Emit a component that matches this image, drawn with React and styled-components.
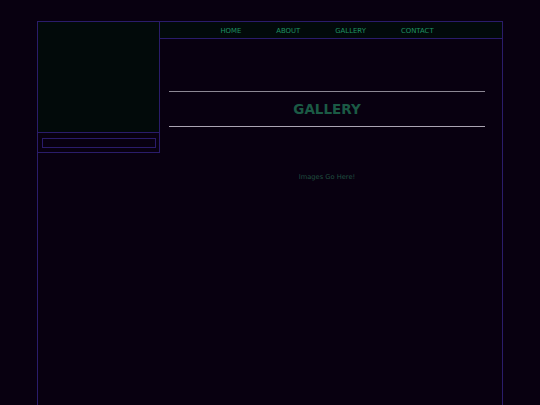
import React from "react"
import styled, { createGlobalStyle } from "styled-components"

const navItems = ["HOME", "ABOUT", "GALLERY", "CONTACT"]

const GlobalStyle = createGlobalStyle`
  html, body {
    margin: 0;
    padding: 0;
    background: #080010;
    font-family: "DejaVu Sans", Verdana, sans-serif;
  }
`

const Page = styled.div`
  width: 466px;
  min-height: 384px;
  margin: 21px 0 0 37px;
  box-sizing: border-box;
  border: 1px solid #2a1c6a;
  border-bottom: none;
  display: flex;
  align-items: flex-start;
`

const Sidebar = styled.aside`
  width: 122px;
  flex-shrink: 0;
  box-sizing: border-box;
  border-right: 1px solid #2a1c6a;
  border-bottom: 1px solid #2a1c6a;
  display: flex;
  flex-direction: column;
`

const Banner = styled.div`
  height: 110px;
  background: #020a0a;
  border-bottom: 1px solid #2a1c6a;
`

const SearchRow = styled.div`
  padding: 5px 3px 4px 4px;
`

const SearchBox = styled.div`
  height: 8px;
  border: 1px solid #2a1c6a;
  background: #080010;
`

const Main = styled.main`
  flex: 1;
  display: flex;
  flex-direction: column;
`

const Nav = styled.nav`
  height: 17px;
  box-sizing: border-box;
  padding: 2px 8px 0 0;
  background: #020a0a;
  border-bottom: 1px solid #2a1c6a;
  display: flex;
  justify-content: center;
  align-items: center;
  gap: 35px;
`

const NavLink = styled.a`
  color: #1f9262;
  font-size: 6.9px;
  text-decoration: none;
`

const Content = styled.section`
  padding: 52px 17px 0 9px;
  display: flex;
  flex-direction: column;
  align-items: stretch;
`

const Rule = styled.div`
  height: 1px;
  background: ${p => p.light ? "#aaa4b2" : "#8c8794"};
`

const Title = styled.h1`
  margin: 0;
  height: 34px;
  line-height: 34px;
  text-align: center;
  font-size: 13.5px;
  font-weight: bold;
  color: #1b5a45;
`

const Placeholder = styled.p`
  margin: 46px 0 0;
  text-align: center;
  font-size: 6.7px;
  color: #205040;
`

export default function App() {
  return (
    <>
      <GlobalStyle />
      <Page>
        <Sidebar>
          <Banner />
          <SearchRow>
            <SearchBox />
          </SearchRow>
        </Sidebar>
        <Main>
          <Nav>
            {navItems.map(item => (
              <NavLink href="#" key={item}>{item}</NavLink>
            ))}
          </Nav>
          <Content>
            <Rule />
            <Title>GALLERY</Title>
            <Rule light />
            <Placeholder>Images Go Here!</Placeholder>
          </Content>
        </Main>
      </Page>
    </>
  )
}
